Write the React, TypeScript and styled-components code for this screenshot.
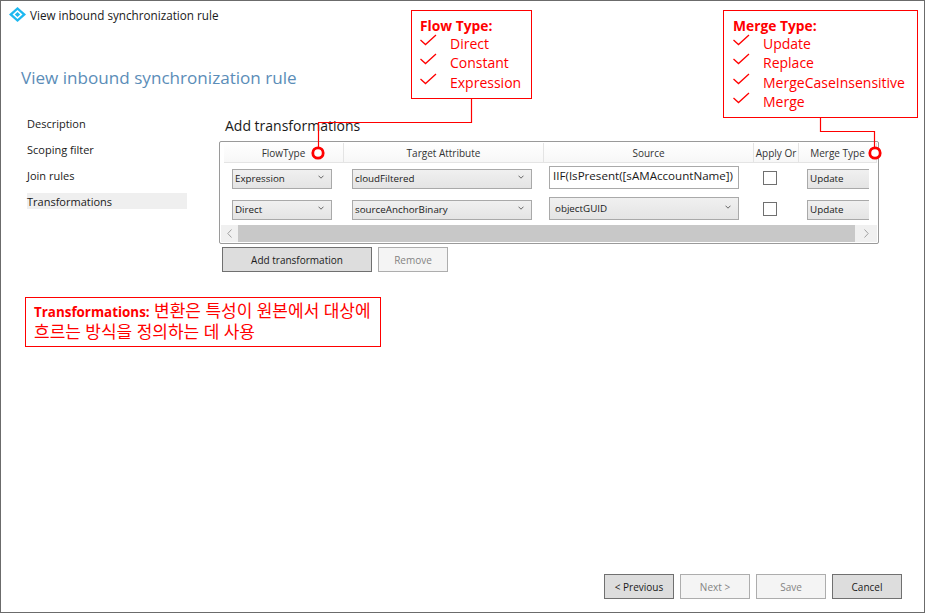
import React from 'react';
import styled, { createGlobalStyle } from 'styled-components';

const GlobalStyle = createGlobalStyle`
  html, body {
    margin: 0;
    padding: 0;
    background: #fff;
  }
`;

const uiFont = `"Open Sans", "Noto Sans", "Noto Sans CJK KR", sans-serif`;

const Window = styled.div`
  position: relative;
  box-sizing: border-box;
  width: 925px;
  height: 613px;
  overflow: hidden;
  display: flex;
  flex-direction: column;
  background: #fff;
  border: 1px solid #6b6b6b;
  font-family: ${uiFont};
  color: #1a1a1a;
`;

const TitleBar = styled.div`
  display: flex;
  align-items: center;
  gap: 4px;
  height: 27px;
  padding-left: 8px;
  font-size: 11.7px;
`;

const Heading = styled.h1`
  margin: 36px 0 0 20px;
  height: 28px;
  font-size: 17.1px;
  line-height: 28px;
  font-weight: 400;
  color: #5b8db8;
`;

const Body = styled.div`
  display: flex;
  margin-top: 22px;
`;

const Nav = styled.nav`
  display: flex;
  flex-direction: column;
  gap: 10px;
  width: 160px;
  margin: 1px 32px 0 26px;
`;

const NavItem = styled.div<{ $active?: boolean }>`
  height: 16px;
  font-size: 11px;
  line-height: 18px;
  background: ${(p) => (p.$active ? '#efefef' : 'transparent')};
`;

const Content = styled.div`
  display: flex;
  flex-direction: column;
  width: 660px;
`;

const SectionTitle = styled.h2`
  margin: 2px 0 5px 6px;
  height: 20px;
  font-size: 14px;
  line-height: 20px;
  font-weight: 400;
`;

const GridFrame = styled.div`
  box-sizing: border-box;
  width: 660px;
  height: 103px;
  padding: 1px;
  display: flex;
  flex-direction: column;
  border: 1px solid #9a9a9a;
  border-radius: 2px;
`;

const HeaderRow = styled.div`
  display: grid;
  grid-template-columns: 120px 200px 210px 45px 78px;
  height: 19px;
  margin-left: 3px;
  background: linear-gradient(#fff, #f7f7f7);
  border-bottom: 1px solid #e4e4e4;
`;

const HeaderCell = styled.div`
  box-sizing: border-box;
  text-align: center;
  font-size: 10px;
  line-height: 21px;
  white-space: nowrap;
  overflow: hidden;
  border-right: 1px solid #e4e4e4;
  color: #333;
`;

const Row = styled.div`
  display: grid;
  grid-template-columns: 120px 200px 210px 45px 71px;
  height: 31px;
  margin-left: 2px;
  align-items: center;
`;

const Cell = styled.div<{ $pad: number }>`
  padding-left: ${(p) => p.$pad}px;
  overflow: hidden;
  display: flex;
  align-items: center;
`;

const Combo = styled.div<{ $w: number; $tall?: boolean }>`
  box-sizing: border-box;
  flex: none;
  width: ${(p) => p.$w}px;
  height: ${(p) => (p.$tall ? 23 : 20)}px;
  margin-bottom: ${(p) => (p.$tall ? 2 : 0)}px;
  display: flex;
  align-items: center;
  justify-content: space-between;
  padding: 0 7px 0 ${(p) => (p.$tall ? 5 : 2)}px;
  border: 1px solid #a9a9a9;
  background: linear-gradient(#f0f0f0, #e4e4e4);
  font-size: 9.8px;
  white-space: nowrap;

  svg {
    margin-top: -3px;
  }
`;

const TextInput = styled.div`
  box-sizing: border-box;
  width: 190px;
  height: 23px;
  margin-bottom: 2px;
  padding-left: 3px;
  border: 1px solid #a9a9a9;
  background: #fff;
  font-size: 11.6px;
  line-height: 18px;
  white-space: nowrap;
  overflow: hidden;
`;

const Check = styled.div`
  box-sizing: border-box;
  width: 14px;
  height: 14px;
  margin-bottom: 1px;
  border: 1px solid #707070;
  background: #fff;
`;

const ScrollBar = styled.div`
  display: flex;
  height: 17px;
  background: #f0f0f0;
`;

const ScrollButton = styled.div<{ $w: number }>`
  flex: none;
  width: ${(p) => p.$w}px;
  display: flex;
  align-items: center;
  justify-content: center;
`;

const ScrollThumb = styled.div`
  flex: 1;
  background: #c8c8c8;
`;

const ButtonRow = styled.div<{ $gap: number }>`
  display: flex;
  gap: ${(p) => p.$gap}px;
`;

const GridActions = styled(ButtonRow)`
  margin: 3px 0 0 3px;
`;

const Button = styled.div<{ $w: number; $disabled?: boolean }>`
  box-sizing: border-box;
  width: ${(p) => p.$w}px;
  height: 25px;
  display: flex;
  align-items: center;
  justify-content: center;
  font-size: 10px;
  border: 1px solid ${(p) => (p.$disabled ? '#adadad' : '#707070')};
  background: ${(p) => (p.$disabled ? '#f4f4f4' : '#dddddd')};
  color: ${(p) => (p.$disabled ? '#838383' : '#1a1a1a')};
`;

const Note = styled.div`
  box-sizing: border-box;
  width: 356px;
  height: 50px;
  margin: 25px 0 0 24px;
  padding: 3px 8px;
  border: 1px solid #ff0000;
  color: #ff0000;
  font-size: 17px;
  line-height: 20px;
  word-break: keep-all;

  b {
    font-size: 13.4px;
  }
`;

const Footer = styled(ButtonRow)`
  margin: auto 0 13px 603px;
`;

const Callout = styled.div<{ $left: number; $width: number; $height: number; $pad: number }>`
  position: absolute;
  left: ${(p) => p.$left}px;
  top: 9px;
  box-sizing: border-box;
  width: ${(p) => p.$width}px;
  height: ${(p) => p.$height}px;
  padding: 5px 0 0 ${(p) => p.$pad}px;
  border: 1px solid #ff0000;
  background: #fff;
  color: #ff0000;
  font-size: 14px;
`;

const CalloutTitle = styled.div`
  height: 17.8px;
  font-size: 13.8px;
  font-weight: 700;
  line-height: 19px;
`;

const CalloutItem = styled.div`
  display: flex;
  align-items: center;
  height: 19.3px;
  white-space: nowrap;

  svg {
    flex: none;
    width: 17px;
    height: 12px;
    margin: -7px 13px 0 0;
  }
`;

const Connectors = styled.svg`
  position: absolute;
  left: -1px;
  top: -1px;
  width: 926px;
  height: 613px;
  pointer-events: none;
`;

const Tick = () => (
  <svg viewBox="0 0 17 12" fill="none" stroke="#ff0000" strokeWidth="1.3">
    <path d="M0.5 6 L5.5 10.5 L16 1" />
  </svg>
);

const Chevron = () => (
  <svg width="6" height="4" viewBox="0 0 6 4" fill="none" stroke="#666" strokeWidth="1">
    <path d="M0.5 0.7 L3 3.2 L5.5 0.7" />
  </svg>
);

const Logo = () => (
  <svg width="17" height="15" viewBox="0 0 17 15">
    <path d="M8.5 0 L17 7.5 L8.5 15 L0 7.5 Z" fill="#1cb8f0" />
    <path d="M8.5 3 L13.5 7.5 L8.5 12 L3.5 7.5 Z" fill="#fff" />
    <path d="M8.5 5 L11.2 7.5 L8.5 10 L5.8 7.5 Z" fill="#1cb8f0" />
  </svg>
);

const flowItems = ['Direct', 'Constant', 'Expression'];
const mergeItems = ['Update', 'Replace', 'MergeCaseInsensitive', 'Merge'];

export default function App() {
  return (
    <>
      <GlobalStyle />
      <Window>
        <TitleBar>
          <Logo />
          View inbound synchronization rule
        </TitleBar>
        <Heading>View inbound synchronization rule</Heading>
        <Body>
          <Nav>
            <NavItem>Description</NavItem>
            <NavItem>Scoping filter</NavItem>
            <NavItem>Join rules</NavItem>
            <NavItem $active>Transformations</NavItem>
          </Nav>
          <Content>
            <SectionTitle>Add transformations</SectionTitle>
            <GridFrame>
              <HeaderRow>
                <HeaderCell>FlowType</HeaderCell>
                <HeaderCell>Target Attribute</HeaderCell>
                <HeaderCell>Source</HeaderCell>
                <HeaderCell>Apply Or</HeaderCell>
                <HeaderCell>Merge Type</HeaderCell>
              </HeaderRow>
              <Row>
                <Cell $pad={9}>
                  <Combo $w={100}>Expression<Chevron /></Combo>
                </Cell>
                <Cell $pad={9}>
                  <Combo $w={180}>cloudFiltered<Chevron /></Combo>
                </Cell>
                <Cell $pad={6}>
                  <TextInput>IIF(IsPresent([sAMAccountName])</TextInput>
                </Cell>
                <Cell $pad={10}>
                  <Check />
                </Cell>
                <Cell $pad={9}>
                  <Combo $w={80}>Update</Combo>
                </Cell>
              </Row>
              <Row>
                <Cell $pad={9}>
                  <Combo $w={100}>Direct<Chevron /></Combo>
                </Cell>
                <Cell $pad={9}>
                  <Combo $w={180}>sourceAnchorBinary<Chevron /></Combo>
                </Cell>
                <Cell $pad={6}>
                  <Combo $w={190} $tall>objectGUID<Chevron /></Combo>
                </Cell>
                <Cell $pad={10}>
                  <Check />
                </Cell>
                <Cell $pad={9}>
                  <Combo $w={80}>Update</Combo>
                </Cell>
              </Row>
              <ScrollBar>
                <ScrollButton $w={17}>
                  <svg width="5" height="9" viewBox="0 0 5 9" fill="none" stroke="#a0a0a0" strokeWidth="1">
                    <path d="M4.5 0.5 L0.8 4.5 L4.5 8.5" />
                  </svg>
                </ScrollButton>
                <ScrollThumb />
                <ScrollButton $w={22}>
                  <svg width="5" height="9" viewBox="0 0 5 9" fill="none" stroke="#a0a0a0" strokeWidth="1">
                    <path d="M0.5 0.5 L4.2 4.5 L0.5 8.5" />
                  </svg>
                </ScrollButton>
              </ScrollBar>
            </GridFrame>
            <GridActions $gap={6}>
              <Button $w={150}>Add transformation</Button>
              <Button $w={70} $disabled>Remove</Button>
            </GridActions>
          </Content>
        </Body>
        <Note>
          <b>Transformations:</b> 변환은 특성이 원본에서 대상에 흐르는 방식을 정의하는 데 사용
        </Note>
        <Footer $gap={6}>
          <Button $w={70}>&lt; Previous</Button>
          <Button $w={70} $disabled>Next &gt;</Button>
          <Button $w={70} $disabled>Save</Button>
          <Button $w={70}>Cancel</Button>
        </Footer>
        <Callout $left={410} $width={121} $height={89} $pad={8}>
          <CalloutTitle>Flow Type:</CalloutTitle>
          {flowItems.map((item) => (
            <CalloutItem key={item}><Tick />{item}</CalloutItem>
          ))}
        </Callout>
        <Callout $left={722} $width={195} $height={108} $pad={9}>
          <CalloutTitle>Merge Type:</CalloutTitle>
          {mergeItems.map((item) => (
            <CalloutItem key={item}><Tick />{item}</CalloutItem>
          ))}
        </Callout>
        <Connectors viewBox="0 0 926 613" fill="none" stroke="#ff0000">
          <path d="M471.5 98 V122.5 H318.5 V147" strokeWidth="1.2" />
          <path d="M820.5 117 V131.5 H874.5 V147" strokeWidth="1.2" />
          <circle cx="318" cy="153" r="5.2" strokeWidth="2.8" fill="#fff" />
          <circle cx="875" cy="153" r="5.2" strokeWidth="2.8" fill="#fff" />
        </Connectors>
      </Window>
    </>
  );
}
